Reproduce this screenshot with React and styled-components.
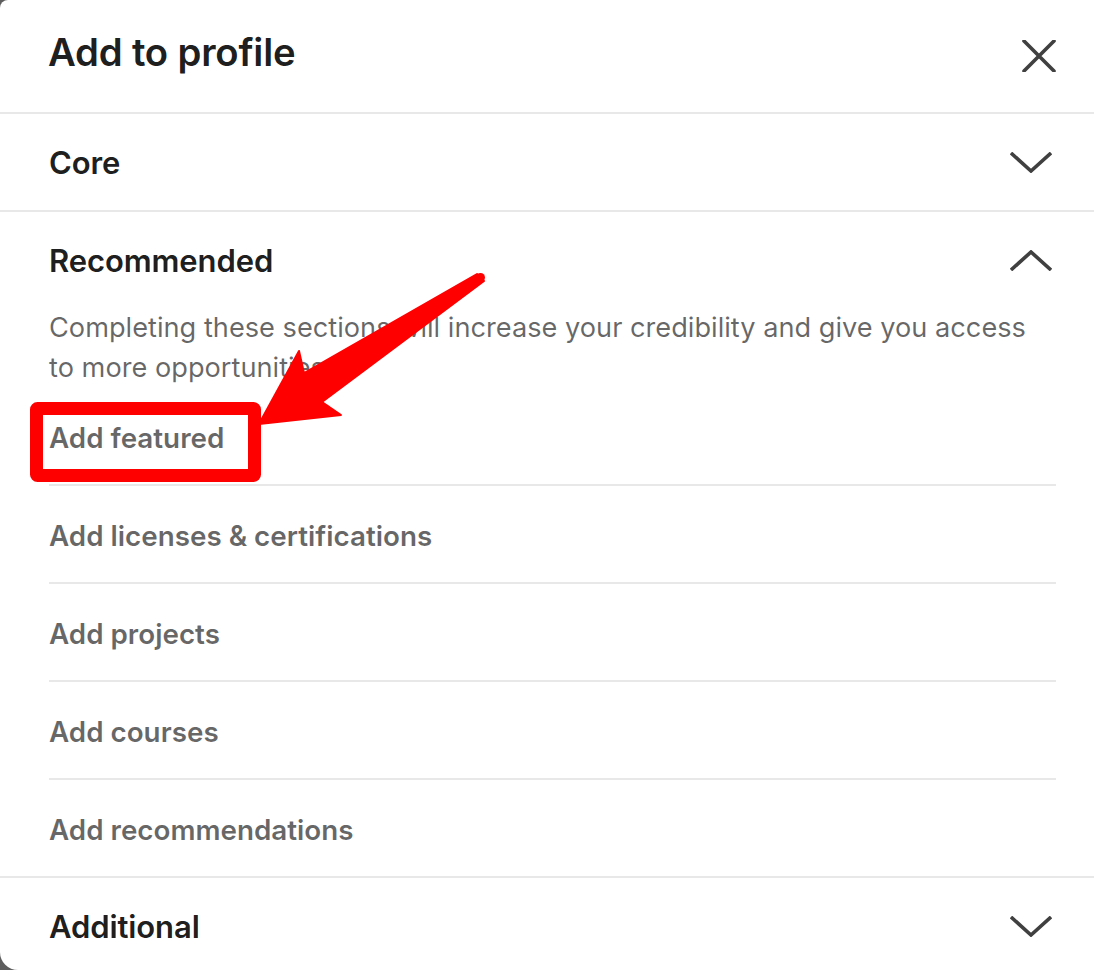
import React from 'react';
import styled, { createGlobalStyle } from 'styled-components';

const GlobalStyle = createGlobalStyle`
  html, body {
    margin: 0;
    padding: 0;
    background: #5e5e5e;
  }
  body {
    font-family: Inter, "Noto Sans", "Liberation Sans", sans-serif;
    -webkit-font-smoothing: antialiased;
  }
`;

const Modal = styled.div`
  position: relative;
  width: 1094px;
  height: 970px;
  background: #fff;
  border-radius: 8px 0 0 18px;
  overflow: hidden;
  color: rgba(0, 0, 0, 0.9);
`;

const Header = styled.header`
  height: 112px;
  display: flex;
  align-items: center;
  justify-content: space-between;
  padding: 0 38px 0 48px;
  border-bottom: 2px solid #e8e8e8;
  box-sizing: content-box;
`;

const Title = styled.h1`
  margin: 0 0 8px;
  font-size: 38.3px;
  font-weight: 600;
  letter-spacing: -0.2px;
`;

const IconButton = styled.button`
  display: flex;
  align-items: center;
  justify-content: center;
  padding: 0;
  border: 0;
  background: none;
  color: #404040;
  cursor: pointer;
`;

const Section = styled.section`
  border-bottom: ${({ last }) => (last ? 'none' : '2px solid #e8e8e8')};
`;

const SectionHeader = styled.div`
  height: 96px;
  display: flex;
  align-items: center;
  justify-content: space-between;
  padding: 0 42px 0 49px;
`;

const SectionTitle = styled.h2`
  margin: 0;
  font-size: 31px;
  font-weight: 600;
  letter-spacing: -0.1px;
`;

const Body = styled.div`
  padding: 0 38px 0 49px;
`;

const Description = styled.p`
  margin: 0;
  font-size: 27.2px;
  line-height: 40px;
  color: rgba(0, 0, 0, 0.6);
  max-width: 990px;
`;

const ItemList = styled.ul`
  list-style: none;
  margin: 0;
  padding: 0;
`;

const Item = styled.li`
  height: 92px;
  padding-top: 4px;
  display: flex;
  align-items: center;
  font-size: 27.8px;
  font-weight: 600;
  color: rgba(0, 0, 0, 0.6);
  border-bottom: 2px solid #e8e8e8;
  &:last-child {
    border-bottom: none;
  }
`;

const Annotation = styled.svg`
  position: absolute;
  left: 0;
  top: 0;
  pointer-events: none;
`;

const CloseIcon = () => (
  <svg width="34" height="32" viewBox="0 0 34 32">
    <path d="M2 1 L32 31 M32 1 L2 31" stroke="currentColor" strokeWidth="3.6" strokeLinecap="round" fill="none" />
  </svg>
);

const Chevron = ({ up }) => (
  <svg width="42" height="21" viewBox="0 0 42 21">
    <path
      d={up ? 'M1 20 L21 2 L41 20' : 'M1 1 L21 19 L41 1'}
      stroke="#404040"
      strokeWidth="3.6"
      fill="none"
    />
  </svg>
);

const recommended = [
  'Add featured',
  'Add licenses & certifications',
  'Add projects',
  'Add courses',
  'Add recommendations',
];

export default function App() {
  return (
    <>
      <GlobalStyle />
      <Modal>
        <Header>
          <Title>Add to profile</Title>
          <IconButton aria-label="Dismiss">
            <CloseIcon />
          </IconButton>
        </Header>

        <Section>
          <SectionHeader>
            <SectionTitle>Core</SectionTitle>
            <Chevron />
          </SectionHeader>
        </Section>

        <Section>
          <SectionHeader>
            <SectionTitle>Recommended</SectionTitle>
            <Chevron up />
          </SectionHeader>
          <Body>
            <Description>
              Completing these sections will increase your credibility and give you access to more
              opportunities.
            </Description>
            <ItemList>
              {recommended.map(label => (
                <Item key={label}>{label}</Item>
              ))}
            </ItemList>
          </Body>
        </Section>

        <Section last>
          <SectionHeader>
            <SectionTitle>Additional</SectionTitle>
            <Chevron />
          </SectionHeader>
        </Section>

        <Annotation width="1094" height="970" viewBox="0 0 1094 970">
          <rect x="36.5" y="408.5" width="218" height="67" rx="1" fill="none" stroke="#ff0000" strokeWidth="13" />
          <path
            d="M259 424 L299 351 L304 373 L477 274 L484 281 L322 402 L341 415 Z"
            fill="#ff0000"
            stroke="#ff0000"
            strokeWidth="2"
            strokeLinejoin="round"
          />
          <circle cx="480.5" cy="277.5" r="4.5" fill="#ff0000" />
        </Annotation>
      </Modal>
    </>
  );
}
